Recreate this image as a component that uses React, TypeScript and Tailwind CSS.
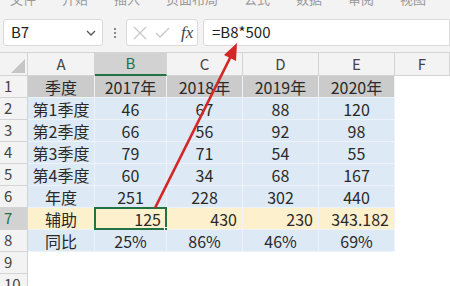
import React from "react";

const cols = ["A", "B", "C", "D", "E", "F"];

type Row = { n: number; cells: string[]; kind: "head" | "blue" | "yellow" | "empty" };

const rows: Row[] = [
  { n: 1, cells: ["季度", "2017年", "2018年", "2019年", "2020年"], kind: "head" },
  { n: 2, cells: ["第1季度", "46", "67", "88", "120"], kind: "blue" },
  { n: 3, cells: ["第2季度", "66", "56", "92", "98"], kind: "blue" },
  { n: 4, cells: ["第3季度", "79", "71", "54", "55"], kind: "blue" },
  { n: 5, cells: ["第4季度", "60", "34", "68", "167"], kind: "blue" },
  { n: 6, cells: ["年度", "251", "228", "302", "440"], kind: "blue" },
  { n: 7, cells: ["辅助", "125", "430", "230", "343.182"], kind: "yellow" },
  { n: 8, cells: ["同比", "25%", "86%", "46%", "69%"], kind: "blue" },
  { n: 9, cells: ["", "", "", "", ""], kind: "empty" },
  { n: 10, cells: ["", "", "", "", ""], kind: "empty" },
];

const menu = ["文件", "开始", "插入", "页面布局", "公式", "数据", "审阅", "视图", "帮助"];

export default function App() {
  const font = { fontFamily: '"Noto Sans CJK SC", "Noto Sans", sans-serif' };
  return (
    <div className="relative w-[450px] h-[286px] overflow-hidden bg-white text-[#333]" style={font}>
      {/* top strip */}
      <div className="h-[10px] bg-[#f3f3f3] overflow-hidden">
        <div className="flex gap-[26px] pl-[10px] -mt-[10px] text-[13px] text-[#999] leading-[18px] whitespace-nowrap">
          {menu.map((m) => (
            <span key={m}>{m}</span>
          ))}
        </div>
      </div>
      {/* formula bar */}
      <div className="h-[42px] bg-[#f3f3f3] flex items-start pt-[9px] pl-[3px]">
        <div className="w-[100px] h-[27px] bg-white border border-[#dadada] rounded-[3px] flex items-center justify-between pl-[7px] pr-[6px]">
          <span className="text-[15px] text-[#222]">B7</span>
          <svg width="10" height="6" viewBox="0 0 10 6">
            <path d="M1 1 L5 5 L9 1" fill="none" stroke="#555" strokeWidth="1.3" />
          </svg>
        </div>
        <div className="w-[23px] h-[27px] flex flex-col items-center justify-center gap-[2px]">
          <span className="w-[2px] h-[2px] bg-[#888]" />
          <span className="w-[2px] h-[2px] bg-[#888]" />
          <span className="w-[2px] h-[2px] bg-[#888]" />
        </div>
        <div className="w-[72px] h-[27px] bg-white border border-[#dadada] rounded-[3px] flex items-center pl-[6px] gap-[8px]">
          <svg width="14" height="14" viewBox="0 0 14 14">
            <path d="M1 1 L13 13 M13 1 L1 13" stroke="#c8c8c8" strokeWidth="1.3" />
          </svg>
          <svg width="15" height="12" viewBox="0 0 15 12">
            <path d="M1 6 L5 10 L14 1" fill="none" stroke="#c8c8c8" strokeWidth="1.3" />
          </svg>
          <span className="text-[17px] italic text-[#444] ml-[3px]" style={{ fontFamily: '"Liberation Serif", serif' }}>
            fx
          </span>
        </div>
        <div className="ml-[5px] flex-1 h-[27px] bg-white border border-[#dadada] rounded-l-[3px] flex items-center pl-[8px]">
          <span className="text-[15px] text-[#222]">=B8*500</span>
        </div>
      </div>
      {/* sheet */}
      <div className="grid grid-cols-[28px_67px_72px_76px_76px_76px_1fr] border-t border-[#d4d4d4]">
        {/* header row */}
        <div className="h-[23px] bg-[#f3f3f3] border-r border-b border-[#d4d4d4] relative">
          <svg className="absolute right-[2px] bottom-[2px]" width="14" height="14" viewBox="0 0 14 14">
            <path d="M14 0 L14 14 L0 14 Z" fill="#c6c6c6" />
          </svg>
        </div>
        {cols.map((c) => (
          <div
            key={c}
            className={
              c === "B"
                ? "h-[23px] bg-[#d2d2d2] border-r border-b-2 border-[#d4d4d4] border-b-[#217346] flex items-center justify-center text-[15px] text-[#217346]"
                : "h-[23px] bg-[#f3f3f3] border-r border-b border-[#d4d4d4] flex items-center justify-center text-[15px] text-[#444]"
            }
          >
            {c}
          </div>
        ))}
        {rows.map((r) => (
          <React.Fragment key={r.n}>
            <div
              className={
                r.n === 7
                  ? "h-[22px] bg-[#d2d2d2] border-r border-b border-[#d4d4d4] flex items-center pl-[4px] text-[15px] text-[#217346]"
                  : "h-[22px] bg-[#f3f3f3] border-r border-b border-[#d4d4d4] flex items-center pl-[4px] text-[15px] text-[#444]"
              }
            >
              {r.n}
            </div>
            {r.cells.map((v, i) => {
              const bg =
                r.kind === "head"
                  ? "bg-[#cbcbcb]"
                  : r.kind === "blue"
                  ? "bg-[#dde9f4]"
                  : r.kind === "yellow"
                  ? "bg-[#fdf0cc]"
                  : "bg-white";
              const border = r.kind === "empty" ? "border-[#ffffff]" : "border-[#eef3f8]";
              const align = r.kind === "yellow" && i > 0 ? "justify-end pr-[5px]" : "justify-center";
              const sel = r.n === 7 && i === 1;
              return (
                <div
                  key={i}
                  className={`h-[22px] ${bg} border-r border-b ${border} flex items-center ${align} text-[16px] text-[#2a2a2a] relative whitespace-nowrap`}
                >
                  {v}
                  {sel && (
                    <>
                      <div className="absolute -left-[1px] -top-[1px] -right-[1px] -bottom-[1px] border-2 border-[#217346]" />
                      <div className="absolute -right-[3px] -bottom-[3px] w-[5px] h-[5px] bg-[#217346] border border-white" />
                    </>
                  )}
                </div>
              );
            })}
            <div className="h-[22px] bg-white" />
          </React.Fragment>
        ))}
      </div>
      {/* arrow overlay */}
      <svg className="absolute left-0 top-0 pointer-events-none" width="450" height="286" viewBox="0 0 450 286">
        <line x1="155" y1="208" x2="231" y2="56" stroke="#d42626" strokeWidth="2.6" />
        <polygon points="237,43 236,61 224,55" fill="#d42626" />
      </svg>
    </div>
  );
}
